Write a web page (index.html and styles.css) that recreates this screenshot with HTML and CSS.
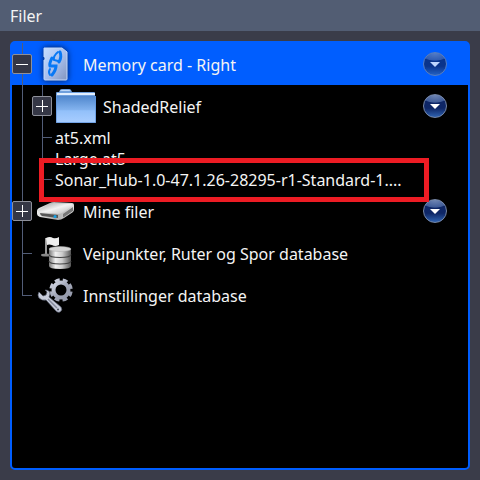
FILE: index.html
```html
<!DOCTYPE html>
<html lang="no">
<head>
    <meta charset="UTF-8">
    <meta name="viewport" content="width=device-width, initial-scale=1.0">
    <title>Filer</title>
    <link rel="stylesheet" href="styles.css">
</head>
<body>
    <header class="titlebar">
        <h1>Filer</h1>
    </header>

    <main class="panel">
        <ul class="tree">
            <li>
                <div class="row selected">
                    <span class="rail line"><button class="toggle minus" aria-label="Skjul"></button></span>
                    <span class="icon">
                        <svg class="card" width="40" height="36" viewBox="0 0 40 36">
                            <defs>
                                <linearGradient id="sd" x1="0" y1="0" x2="1" y2="1">
                                    <stop offset="0" stop-color="#c4dcff"/>
                                    <stop offset="0.5" stop-color="#a9c0ee"/>
                                    <stop offset="1" stop-color="#8295be"/>
                                </linearGradient>
                            </defs>
                            <path d="M8 2h18l5 4v27q0 1-1 1H9q-1 0-1-1V14h1v-3H8z" fill="url(#sd)" stroke="#c5d9fa"/>
                            <g fill="none" stroke="#0878f5" stroke-linecap="round" stroke-width="3">
                                <path d="M24 6q2 5-1 10"/>
                                <path d="M22 6q-5 4-4 8l4 1" stroke-width="2"/>
                                <path d="M16 12q-3 6-2 8l6 0q0 4-4 9"/>
                                <path d="M14 23q-2 3 0 6" stroke-width="2"/>
                            </g>
                        </svg>
                    </span>
                    <span class="name">Memory card - Right</span>
                    <button class="menu" aria-label="Meny for Memory card - Right"></button>
                </div>
                <ul>
                    <li class="row">
                        <span class="rail line"></span>
                        <span class="rail line"><button class="toggle plus" aria-label="Vis"></button></span>
                        <span class="icon">
                            <svg width="40" height="36" viewBox="0 0 40 36">
                                <defs>
                                    <linearGradient id="folder" x1="0" y1="0" x2="0" y2="1">
                                        <stop offset="0" stop-color="#4f86cc"/>
                                        <stop offset="0.5" stop-color="#82b2ee"/>
                                        <stop offset="0.55" stop-color="#92c0fa"/>
                                        <stop offset="1" stop-color="#a9ceff"/>
                                    </linearGradient>
                                </defs>
                                <path d="M0 5q0-1 1-1h2l1-2q.5-1 2-1h7q1.500 0 2 1l1 2h22q1 0 1 1v4H0z" fill="#6f9fdc"/>
                                <path d="M4 3q.5-1 2-1h7q1 0 1.500 1z" fill="#bcd6f7"/>
                                <path d="M1 5h38v2H1z" fill="#e2efff"/>
                                <path d="M0 8h40v26q0 1-1 1H1q-1 0-1-1z" fill="url(#folder)"/>
                                <path d="M.5 8v26.500h39V8" fill="none" stroke="#5c93dc" stroke-opacity=".7"/>
                            </svg>
                        </span>
                        <span class="name">ShadedRelief</span>
                        <button class="menu" aria-label="Meny for ShadedRelief"></button>
                    </li>
                    <li class="row file">
                        <span class="rail line"></span>
                        <span class="rail line branch"></span>
                        <span class="name">at5.xml</span>
                    </li>
                    <li class="row file">
                        <span class="rail line"></span>
                        <span class="rail line branch"></span>
                        <span class="name">Large.at5</span>
                    </li>
                    <li class="row file marked">
                        <span class="rail line"></span>
                        <span class="rail last branch"></span>
                        <span class="name">Sonar_Hub-1.0-47.1.26-28295-r1-Standard-1....</span>
                    </li>
                </ul>
            </li>
            <li class="row">
                <span class="rail line"><button class="toggle plus" aria-label="Vis"></button></span>
                <span class="icon">
                    <svg width="40" height="20" viewBox="0 0 40 20">
                        <defs>
                            <linearGradient id="drive" x1="0" y1="0" x2="1" y2="1">
                                <stop offset="0" stop-color="#999"/>
                                <stop offset="0.5" stop-color="#f2f2f2"/>
                                <stop offset="1" stop-color="#b5b5b5"/>
                            </linearGradient>
                            <linearGradient id="front" x1="0" y1="0" x2="1" y2="0">
                                <stop offset="0" stop-color="#eee"/>
                                <stop offset="0.5" stop-color="#aaa"/>
                                <stop offset="1" stop-color="#ddd"/>
                            </linearGradient>
                        </defs>
                        <path d="M1 10q0-2 2-3l11-5q2-1 4-1l18 1q2 0 2 2v4q0 2-1 3l-9 6q-3 2-6 2L4 16q-3-1-3-3z" fill="url(#front)"/>
                        <path d="M2 9l12-6q2-1 4-1l17 1q3 0 1 2l-10 7q-2 1-4 1L3 11q-2-1-1-2z" fill="url(#drive)"/>
                        <path d="M27 13l10-7v4l-9 6q-1 1-1-1z" fill="#777"/>
                        <path d="M4 12l18 2v3L6 15q-2-1-2-3z" fill="#555"/>
                        <circle cx="19" cy="15.500" r="1.500" fill="#0fa0e8"/>
                    </svg>
                </span>
                <span class="name">Mine filer</span>
                <button class="menu" aria-label="Meny for Mine filer"></button>
            </li>
            <li class="row">
                <span class="rail line branch"></span>
                <span class="icon">
                    <svg width="40" height="36" viewBox="0 0 40 36">
                        <defs>
                            <linearGradient id="disk" x1="0" y1="0" x2="1" y2="0">
                                <stop offset="0" stop-color="#777"/>
                                <stop offset="0.3" stop-color="#f0f0f0"/>
                                <stop offset="0.6" stop-color="#ccc"/>
                                <stop offset="1" stop-color="#555"/>
                            </linearGradient>
                        </defs>
                        <path d="M9 3h2v17H9z" fill="#999"/>
                        <path d="M10 3q4-2 7 0q3 1 6-1v8q-4 2-7 0q-3-1-5 0z" fill="#eee"/>
                        <ellipse cx="10" cy="20" rx="5" ry="1.500" fill="#888"/>
                        <path d="M13 14v17q0 3 11 3t11-3V14z" fill="url(#disk)"/>
                        <ellipse cx="24" cy="14" rx="11" ry="2.500" fill="#d5d5d5" stroke="#aaa" stroke-width=".5"/>
                        <path d="M13 19.500q0 3 11 3t11-3M13 26q0 3 11 3t11-3" fill="none" stroke="#444" stroke-width="1.200"/>
                    </svg>
                </span>
                <span class="name">Veipunkter, Ruter og Spor database</span>
            </li>
            <li class="row">
                <span class="rail last branch"></span>
                <span class="icon">
                    <svg width="40" height="36" viewBox="0 0 40 36">
                        <defs>
                            <linearGradient id="steel" x1="0" y1="0" x2="1" y2="1">
                                <stop offset="0" stop-color="#d5d9e6"/>
                                <stop offset="0.5" stop-color="#a3a8b9"/>
                                <stop offset="1" stop-color="#9297a8"/>
                            </linearGradient>
                        </defs>
                        <g fill="none" stroke="url(#steel)">
                            <circle cx="25" cy="13" r="7.500" stroke-width="4"/>
                            <circle cx="25" cy="13" r="10" stroke-width="3.500" stroke-dasharray="4.854 3" transform="rotate(8 25 13)"/>
                        </g>
                        <path d="M3 15l4 4 3-1 1-3-2-2q5 0 5 4l-1 3 12 10q2 3-1 5-2 1-4-1L10 23q-4 1-7-2-2-3 0-6z" fill="#c7ccdb" stroke="#555a6b" stroke-width=".7"/>
                        <path d="M12 22l9 9" stroke="#858a9b" stroke-width="1.500"/>
                        <circle cx="22" cy="32.500" r="1" fill="#444957"/>
                    </svg>
                </span>
                <span class="name">Innstillinger database</span>
            </li>
        </ul>
    </main>
</body>
</html>
```

FILE: styles.css
```css
* {
    box-sizing: border-box;
}
body {
    margin: 0;
    min-height: 100vh;
    display: flex;
    flex-direction: column;
    background-color: #3a3c49;
    color: #f4f4f4;
    font-family: "Noto Sans", sans-serif;
    font-size: 16px;
}
.titlebar {
    padding: 2px 10px 0;
    background-color: #525d73;
}
.titlebar h1 {
    margin: 0;
    font-size: 16px;
    font-weight: normal;
    line-height: 29px;
}
.panel {
    flex: 1;
    margin: 10px;
    border: 2px solid #005eff;
    border-radius: 5px;
    background-color: #000;
}
.tree,
.tree ul {
    margin: 0;
    padding: 0;
    list-style: none;
}
.row {
    display: flex;
    align-items: center;
    height: 42px;
    padding-right: 21px;
}
.row.file {
    height: 21px;
}
.row.selected {
    background-color: #005eff;
}

/* tree lines */
.rail {
    flex: none;
    width: 20px;
    height: 100%;
    display: flex;
    align-items: center;
    background-repeat: no-repeat;
}
.rail.line {
    background-image: linear-gradient(#525d78, #525d78);
    background-size: 1px 100%;
    background-position: 10px 0;
}
.rail.last {
    background-image: linear-gradient(#525d78, #525d78);
    background-size: 1px 50%;
    background-position: 10px 0;
}
.rail.branch::after {
    content: "";
    width: 10px;
    height: 1px;
    margin-left: 10px;
    background-color: #525d78;
}
.toggle {
    width: 20px;
    height: 20px;
    padding: 0;
    border: 1px solid #8e909a;
    border-radius: 2px;
    background-color: #353746;
    background-image: linear-gradient(#fff, #fff), linear-gradient(#fff, #fff);
    background-repeat: no-repeat;
    background-position: center;
    cursor: pointer;
}
.toggle.minus {
    background-size: 12px 1px, 0 0;
}
.toggle.plus {
    background-size: 12px 1px, 1px 12px;
}

.icon {
    flex: none;
    width: 48px;
    display: flex;
    justify-content: center;
}
.card {
    filter: drop-shadow(0 0 3px #001a50);
}
.name {
    flex: 1;
    margin-left: 3px;
    padding-top: 2px;
    white-space: nowrap;
}
.file .name {
    padding-top: 0;
}
.menu {
    width: 24px;
    height: 24px;
    padding: 0;
    border: 1px solid #7788a8;
    border-radius: 50%;
    display: flex;
    align-items: center;
    justify-content: center;
    background: radial-gradient(ellipse 14px 8px at 50% 0, #7187b4 0, #405c98 90%, transparent 100%), linear-gradient(#0e2666 60%, #2f62b0);
    cursor: pointer;
}
.menu::after {
    content: "";
    border: 5px solid transparent;
    border-top-color: #fff;
    border-bottom: 0;
}
.selected .menu {
    opacity: 0.75;
}

.marked {
    position: relative;
}
.marked::after {
    content: "";
    position: absolute;
    top: -11px;
    right: 39px;
    bottom: -12px;
    left: 27px;
    border: 5px solid #ed1c24;
}
```
